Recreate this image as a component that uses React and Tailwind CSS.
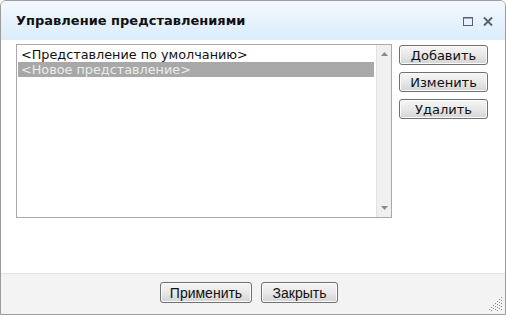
import React from "react";

function Btn({ children, w }) {
  return (
    <button
      className={`${w} h-[20px] border border-[#707070] rounded-[3px] bg-gradient-to-b from-[#f6f6f6] via-[#e8e8e8] to-[#d4d4d4] text-[13px] leading-none text-[#111] flex items-center justify-center font-['DejaVu_Sans',sans-serif] shadow-[inset_0_0_0_1px_#fcfcfc]`}
    >
      {children}
    </button>
  );
}

function FBtn({ children, w }) {
  return (
    <button
      className={`${w} h-[21px] border border-[#707070] rounded-[3px] bg-gradient-to-b from-[#f6f6f6] via-[#e8e8e8] to-[#d4d4d4] text-[14px] leading-none text-[#111] flex items-center justify-center font-['Liberation_Sans',sans-serif] shadow-[inset_0_0_0_1px_#fcfcfc]`}
    >
      {children}
    </button>
  );
}

export default function App() {
  return (
    <div className="w-[506px] h-[315px] flex flex-col border border-[#9c9c9c] rounded-t-[6px] overflow-hidden bg-white font-['DejaVu_Sans',sans-serif]">
      <div className="h-[39px] shrink-0 bg-gradient-to-b from-[#f3f8fe] to-[#dbedfc] flex items-center justify-between pl-[15px] pr-[12px]">
        <span className="text-[13px] font-bold text-[#111] pt-[1px]">Управление представлениями</span>
        <div className="flex items-center gap-[10px] pt-[2px]">
          <svg width="10" height="9" viewBox="0 0 10 9">
            <rect x="0.5" y="0.5" width="9" height="8" fill="none" stroke="#5b6172" strokeWidth="1" />
            <line x1="0" y1="1" x2="10" y2="1" stroke="#5b6172" strokeWidth="1" />
          </svg>
          <svg width="10" height="9" viewBox="0 0 10 9">
            <path d="M1 0.5 L9 8.5 M9 0.5 L1 8.5" stroke="#5b6172" strokeWidth="2" />
          </svg>
        </div>
      </div>

      <div className="h-[233px] shrink-0 flex items-start pl-[15px] pt-[4px] gap-[7px]">
        <div className="w-[376px] h-[174px] border border-[#a9a9a9] flex">
          <div className="flex-1 pt-[2px] pl-[1px] pr-[2px] text-[12.8px] leading-[15px]">
            <div className="h-[15px] px-[3px] text-[#111] whitespace-nowrap">&lt;Представление по умолчанию&gt;</div>
            <div className="h-[15px] px-[3px] bg-[#a8a8a8] text-[#ececec] whitespace-nowrap">&lt;Новое представление&gt;</div>
          </div>
          <div className="w-[15px] h-full bg-[#f0f0f0] border-l border-[#e2e2e2] flex flex-col items-center justify-between py-[7px]">
            <svg width="7" height="4" viewBox="0 0 7 4">
              <path d="M0 4 L3.5 0 L7 4 Z" fill="#8a8a8a" />
            </svg>
            <svg width="7" height="4" viewBox="0 0 7 4">
              <path d="M0 0 L7 0 L3.5 4 Z" fill="#8a8a8a" />
            </svg>
          </div>
        </div>
        <div className="flex flex-col gap-[7px] pt-[1px]">
          <Btn w="w-[89px]">Добавить</Btn>
          <Btn w="w-[89px]">Изменить</Btn>
          <Btn w="w-[89px]">Удалить</Btn>
        </div>
      </div>

      <div className="relative flex-1 bg-[#f3f3f3] border-t border-[#e2e2e2] flex justify-center items-start pt-[8px] gap-[9px] pr-[8px]">
        <FBtn w="w-[92px]">Применить</FBtn>
        <FBtn w="w-[77px]">Закрыть</FBtn>
        <svg className="absolute right-[2px] bottom-[2px]" width="16" height="16" viewBox="0 0 16 16">
          {[
            [14, 1], [12, 3], [10, 5], [8, 7], [6, 9], [4, 11], [2, 13],
            [14, 4], [12, 6], [10, 8], [8, 10], [6, 12], [4, 14],
            [14, 7], [12, 9], [10, 11], [8, 13],
            [14, 10], [12, 12], [10, 14],
            [14, 13],
          ].map(([x, y], i) => (
            <rect key={i} x={x} y={y} width="1" height="1" fill="#8a8a8a" />
          ))}
        </svg>
      </div>
    </div>
  );
}
